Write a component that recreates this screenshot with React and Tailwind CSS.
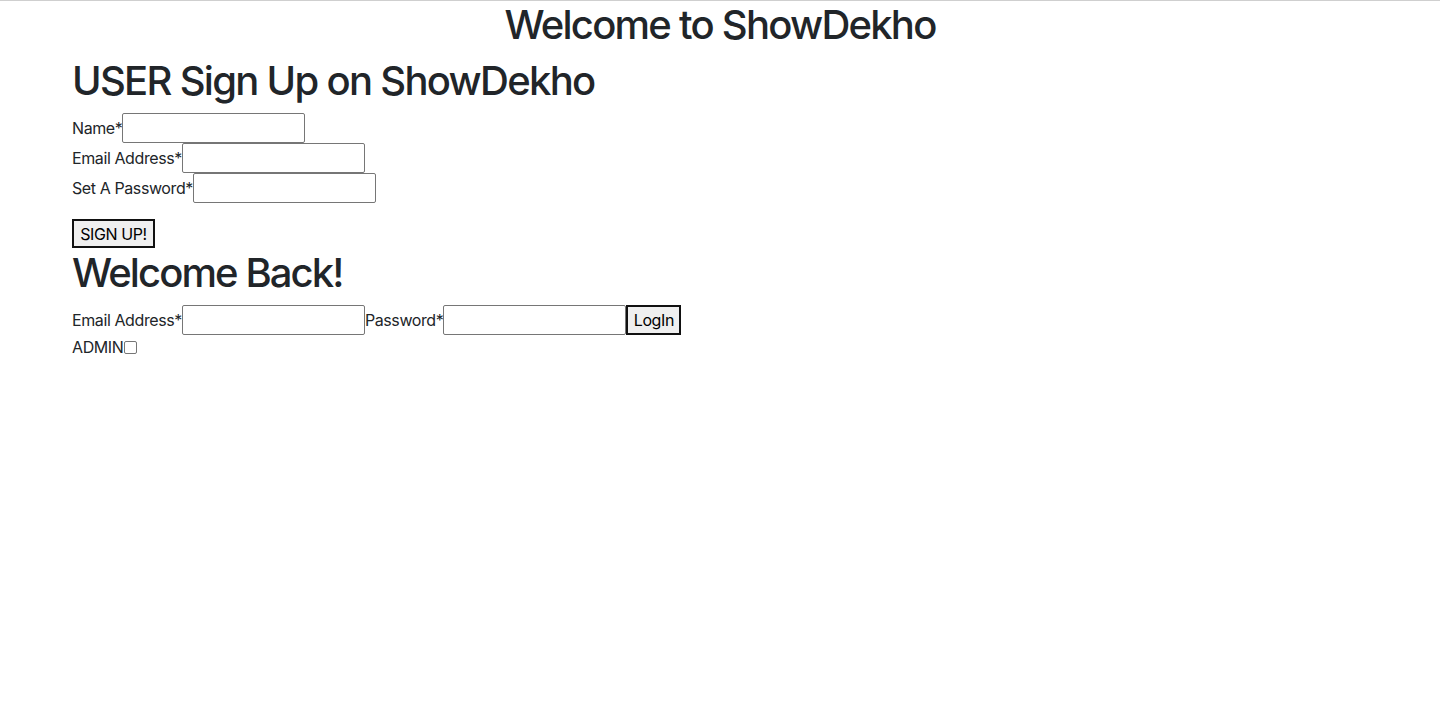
export default function App() {
  return (
    <div className="min-h-screen border-t border-[#cfcfcf] bg-white font-['Inter',sans-serif] text-base leading-6 tracking-[-0.4px] text-[#212529]">
      <h1 className="mb-2 text-center text-[40px] font-medium leading-[48px] tracking-[-1.75px]">Welcome to ShowDekho</h1>
      <div className="mx-auto max-w-[1320px] px-3">
        <h1 className="mb-2 text-[40px] font-medium leading-[48px] tracking-[-1.7px]">USER Sign Up on ShowDekho</h1>
        <form onSubmit={(e) => e.preventDefault()}>
          <div className="flex items-center">
            <label htmlFor="name">Name*</label>
            <input id="name" type="text" className="h-[30px] w-[183px] rounded-[2px] border border-[#767676] px-0.5 text-black" />
          </div>
          <div className="flex items-center">
            <label htmlFor="email">Email Address*</label>
            <input id="email" type="email" className="h-[30px] w-[183px] rounded-[2px] border border-[#767676] px-0.5 text-black" />
          </div>
          <div className="flex items-center">
            <label htmlFor="pass">Set A Password*</label>
            <input id="pass" type="password" className="h-[30px] w-[183px] rounded-[2px] border border-[#767676] px-0.5 text-black" />
          </div>
          <button type="submit" className="mt-4 h-[29px] w-[83px] border-2 border-[#111] bg-[#efefef] leading-[24px] text-black">
            SIGN UP!
          </button>
        </form>
        <h1 className="mb-2 mt-px text-[40px] font-medium leading-[48px] tracking-[-1.9px]">Welcome Back!</h1>
        <form onSubmit={(e) => e.preventDefault()}>
          <div className="flex items-center">
            <label htmlFor="lemail">Email Address*</label>
            <input id="lemail" type="email" className="h-[30px] w-[183px] rounded-[2px] border border-[#767676] px-0.5 text-black" />
            <label htmlFor="lpass">Password*</label>
            <input id="lpass" type="password" className="h-[30px] w-[183px] rounded-[2px] border border-[#767676] px-0.5 text-black" />
            <button type="submit" className="h-[30px] w-[55px] border-2 border-[#111] bg-[#efefef] leading-[24px] text-black">
              LogIn
            </button>
          </div>
          <div className="flex items-center">
            <label htmlFor="admin">ADMIN</label>
            <input id="admin" type="checkbox" className="ml-px h-[13px] w-[13px] appearance-none rounded-[2px] border border-[#767676] bg-white" />
          </div>
        </form>
      </div>
    </div>
  );
}
